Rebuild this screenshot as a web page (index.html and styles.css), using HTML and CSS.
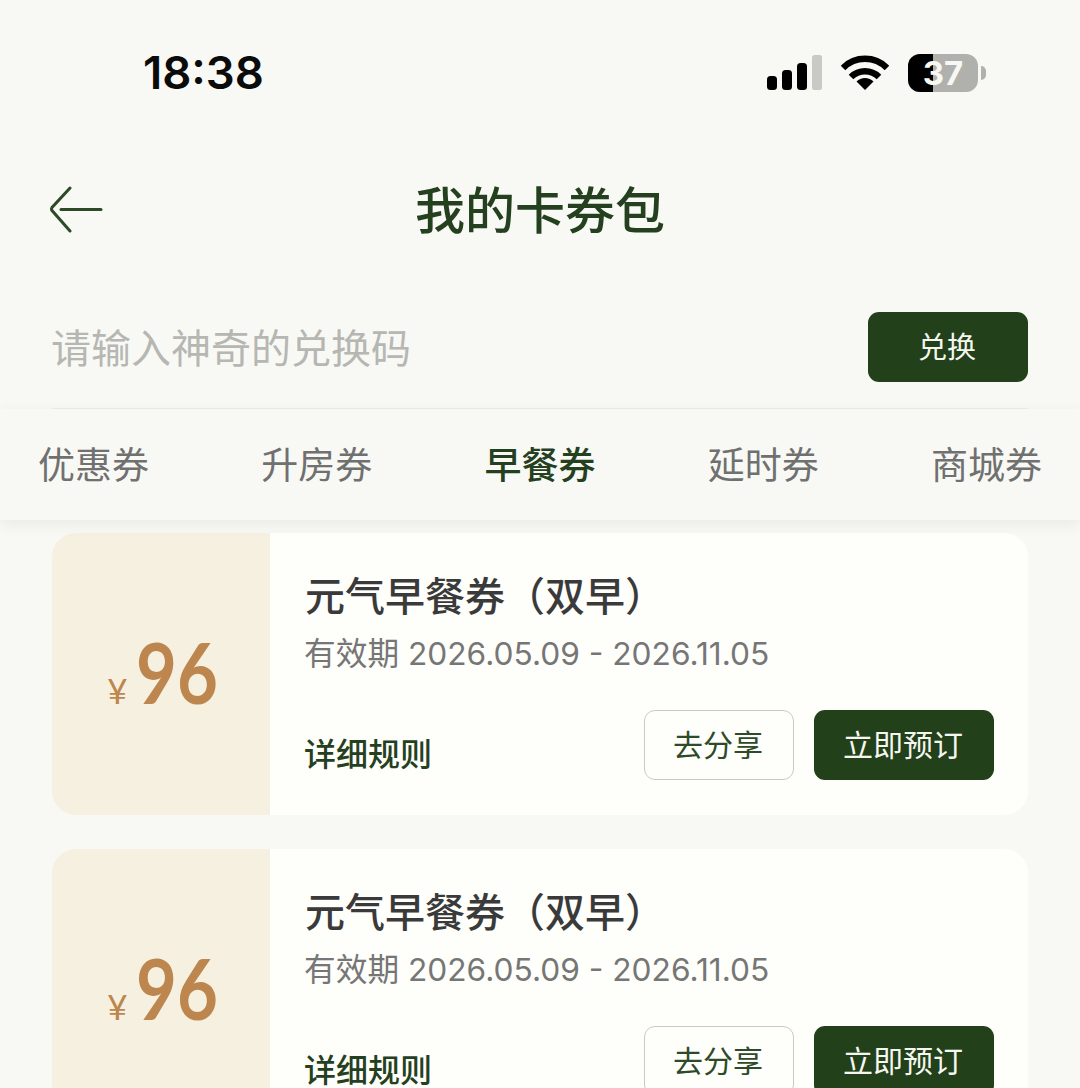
FILE: index.html
```html
<!DOCTYPE html>
<html lang="zh-CN">
<head>
<meta charset="utf-8">
<title>我的卡券包</title>
<link rel="stylesheet" href="styles.css">
</head>
<body>
<div class="page">
  <div class="status">
    <span class="time">18:38</span>
    <div class="status-icons">
      <svg class="signal" width="55" height="36" viewBox="0 0 55 36">
        <rect x="0" y="21" width="10" height="14" rx="3.5" fill="#000"/>
        <rect x="15" y="15" width="10" height="20" rx="3.5" fill="#000"/>
        <rect x="30" y="8" width="10" height="27" rx="3.5" fill="#000"/>
        <rect x="45" y="0" width="10" height="35" rx="2.5" fill="#c9c9c5"/>
      </svg>
      <svg class="wifi" width="48" height="36" viewBox="0 0 48 36">
        <path d="M2 13A31 31 0 0 1 46 13" fill="none" stroke="#000" stroke-width="6.5"/>
        <path d="M10 22A20 20 0 0 1 38 22" fill="none" stroke="#000" stroke-width="6.5"/>
        <path d="M24 35L15.5 26.5A12 12 0 0 1 32.5 26.5Z" fill="#000"/>
      </svg>
      <div class="battery">
        <div class="battery-body"><span class="battery-fill"></span><span class="battery-num">37</span></div>
        <span class="battery-nub"></span>
      </div>
    </div>
  </div>

  <header class="nav">
    <svg class="back" width="56" height="48" viewBox="0 0 56 48">
      <path d="M22 2L4 21.5Q3 23 4 24.5L22 45" fill="none" stroke="#2c4a26" stroke-width="3" stroke-linecap="round"/>
      <path d="M13 23.500H53" fill="none" stroke="#2c4a26" stroke-width="3" stroke-linecap="round"/>
    </svg>
    <h1 class="nav-title">我的卡券包</h1>
  </header>

  <div class="redeem">
    <span class="redeem-input">请输入神奇的兑换码</span>
    <button class="btn btn-solid btn-redeem">兑换</button>
  </div>

  <nav class="tabs">
    <span class="tab">优惠券</span>
    <span class="tab">升房券</span>
    <span class="tab tab-active">早餐券</span>
    <span class="tab">延时券</span>
    <span class="tab">商城券</span>
  </nav>

  <main class="list">
    <article class="card">
      <div class="card-value"><span class="yen">¥</span><span class="amount">96</span></div>
      <div class="card-body">
        <h2 class="card-title">元气早餐券（双早）</h2>
        <p class="card-date">有效期 2026.05.09 - 2026.11.05</p>
        <div class="card-foot">
          <a class="rules">详细规则</a>
          <div class="actions">
            <button class="btn btn-line">去分享</button>
            <button class="btn btn-solid btn-book">立即预订</button>
          </div>
        </div>
      </div>
    </article>
    <article class="card">
      <div class="card-value"><span class="yen">¥</span><span class="amount">96</span></div>
      <div class="card-body">
        <h2 class="card-title">元气早餐券（双早）</h2>
        <p class="card-date">有效期 2026.05.09 - 2026.11.05</p>
        <div class="card-foot">
          <a class="rules">详细规则</a>
          <div class="actions">
            <button class="btn btn-line">去分享</button>
            <button class="btn btn-solid btn-book">立即预订</button>
          </div>
        </div>
      </div>
    </article>
  </main>
</div>
</body>
</html>
```
FILE: styles.css
```css
* { box-sizing: border-box; }
html, body { margin: 0; padding: 0; height: 100%; overflow: hidden; }
body {
  background: #f8f9f4;
  font-family: "Inter", "Noto Sans CJK SC", sans-serif;
}
.page { width: 1080px; height: 1088px; overflow: hidden; display: flex; flex-direction: column; }

.status {
  height: 146px;
  flex: none;
  display: flex;
  align-items: center;
  justify-content: space-between;
  padding: 0 94px 0 143px;
}
.time { font-size: 45.500px; font-weight: 600; color: #0b0b0b; line-height: 1; }
.status-icons { display: flex; align-items: center; gap: 19px; }
.signal, .wifi { display: block; }
.battery { display: flex; align-items: center; gap: 3px; }
.battery-body {
  width: 70px;
  height: 38px;
  border-radius: 12px;
  background: #b0b0ac;
  display: flex;
  position: relative;
  align-items: center;
  justify-content: center;
}
.battery-fill { position: absolute; left: 0; top: 0; bottom: 0; width: 25px; background: #000; border-radius: 12px 0 0 12px; }
.battery-num { position: relative; font-size: 33px; font-weight: 700; color: #f7f8f3; line-height: 1; }
.battery-nub { width: 5px; height: 14px; background: #b0b0ac; border-radius: 0 5px 5px 0; }

.nav {
  height: 128px;
  flex: none;
  display: flex;
  align-items: center;
  justify-content: center;
  padding-bottom: 6px;
  position: relative;
}
.back { position: absolute; left: 48px; top: 40px; }
.nav-title {
  margin: 0;
  font-family: "Noto Sans CJK SC", sans-serif;
  font-size: 50px;
  font-weight: 500;
  color: #24401f;
  line-height: 1;
}

.redeem {
  flex: none;
  height: 135px;
  margin: 0 52px;
  padding-top: 38px;
  border-bottom: 1px solid #ecede8;
  display: flex;
  align-items: flex-start;
  justify-content: space-between;
}
.redeem-input {
  font-family: "Noto Sans CJK SC", sans-serif;
  font-size: 40px;
  line-height: 68px;
  margin-left: -1px;
  color: #b6b6b3;
}

.btn {
  font-family: "Noto Sans CJK SC", sans-serif;
  font-size: 30px;
  height: 70px;
  border-radius: 11px;
  padding: 0 2px 4px 0;
  display: block;
}
.btn-solid { background: #22401a; color: #f6f6f0; border: 0; }
.btn-line { width: 150px; background: #fefefb; color: #2e4a28; border: 1.5px solid #c9c9c6; }
.btn-redeem { width: 160px; font-size: 29px; }
.btn-book { width: 180px; }

.tabs {
  flex: none;
  height: 111px;
  padding: 0 38px 2px;
  display: flex;
  align-items: center;
  justify-content: space-between;
  background: #f8f9f4;
  box-shadow: 0 4px 14px rgba(60, 60, 50, 0.08);
  position: relative;
  z-index: 1;
}
.tab {
  font-family: "Noto Sans CJK SC", sans-serif;
  font-size: 37px;
  color: #707070;
  line-height: 1;
}
.tab-active { color: #24401f; font-weight: 500; }

.list { flex: none; padding: 13px 52px 0; display: flex; flex-direction: column; gap: 34.500px; }
.card {
  flex: none;
  height: 281.500px;
  border-radius: 24px;
  background: #fefefa;
  overflow: hidden;
  display: flex;
}
.card-value {
  width: 218px;
  flex: none;
  background: #f5f0df;
  color: #bd864e;
  display: flex;
  align-items: baseline;
  justify-content: center;
  padding-top: 88px;
  font-family: "Lato", sans-serif;
}
.yen { font-size: 35px; line-height: 100px; margin-right: 8px; margin-left: 3px; }
.amount { font-size: 85px; line-height: 100px; display: inline-block; transform: scaleX(0.83); transform-origin: left center; width: 82px; font-weight: 700; }

.card-body { flex: 1; min-width: 0; padding: 36px 34px 0 35px; }
.card-title {
  margin: 0;
  font-family: "Noto Sans CJK SC", sans-serif;
  font-size: 40px;
  font-weight: 500;
  color: #3a3a3a;
  line-height: 50px;
}
.card-date {
  margin: 13px 0 0;
  font-size: 31.700px;
  line-height: 44px;
  color: #767676;
  margin-left: -1px;
}
.card-foot { margin-top: 34px; display: flex; align-items: flex-end; justify-content: space-between; }
.rules {
  font-family: "Noto Sans CJK SC", sans-serif;
  font-size: 32px;
  font-weight: 500;
  color: #24401f;
  line-height: 50px;
  padding-bottom: 3px;
  margin-left: -1px;
}
.actions { display: flex; gap: 20px; }
```
